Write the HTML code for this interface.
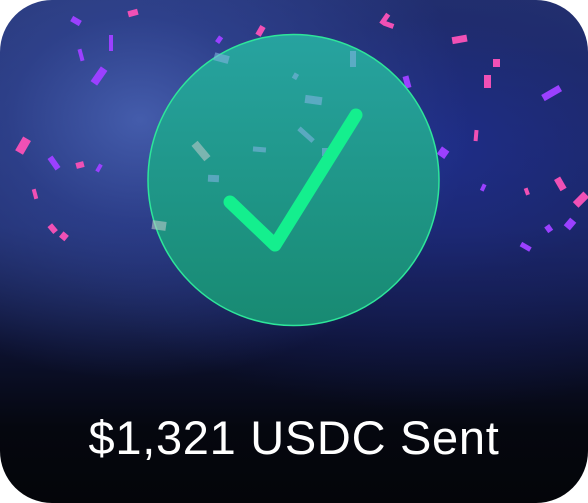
<!DOCTYPE html>
<html><head><meta charset="utf-8"><style>
html,body{margin:0;padding:0;background:#fff;}
.card{position:relative;width:588px;height:503px;border-radius:52px;overflow:hidden;
background:
radial-gradient(ellipse 330px 260px at 140px 120px, rgba(70,95,175,0.95) 0%, rgba(50,70,150,0.7) 40%, rgba(30,40,110,0) 100%),
radial-gradient(ellipse 420px 260px at 430px 150px, rgba(30,45,140,0.9) 0%, rgba(25,35,110,0.5) 50%, rgba(10,15,50,0) 100%),
linear-gradient(180deg,#27366f 0%,#1d2a66 45%,#0d1231 68%,#05070f 85%,#040509 100%);}
svg{position:absolute;left:0;top:0;}
.t{position:absolute;left:0;width:588px;top:410px;text-align:center;color:#fff;font-family:"Liberation Sans",sans-serif;font-size:47px;letter-spacing:0.7px;line-height:56px;}
</style></head><body>
<div class="card">
<svg width="588" height="503" viewBox="0 0 588 503">
<defs><linearGradient id="g" x1="0" y1="0" x2="0" y2="1"><stop offset="0" stop-color="#27a3a0"/><stop offset="1" stop-color="#188a72"/></linearGradient></defs>
<g fill="#9b40ff">
<rect x="71" y="18" width="10" height="6" transform="rotate(30 76 21)"/>
<rect x="109" y="35" width="4" height="16"/>
<rect x="79" y="49" width="4" height="12" transform="rotate(-15 81 55)"/>
<rect x="95" y="67" width="8" height="18" transform="rotate(35 99 76)"/>
<rect x="51" y="156" width="6" height="14" transform="rotate(-35 54 163)"/>
<rect x="97" y="164" width="4" height="8" transform="rotate(30 99 168)"/>
<rect x="217" y="36" width="5" height="7" transform="rotate(35 219 39)"/>
<rect x="404" y="76" width="6" height="12" transform="rotate(-15 407 82)"/>
<rect x="439" y="148" width="9" height="9" transform="rotate(35 443 152)"/>
<rect x="542" y="90" width="20" height="7" transform="rotate(-30 551 94)"/>
<rect x="481" y="184" width="4" height="7" transform="rotate(25 483 188)"/>
<rect x="566" y="219" width="8" height="10" transform="rotate(40 570 224)"/>
<rect x="546" y="225" width="6" height="7" transform="rotate(-35 549 229)"/>
<rect x="520" y="244" width="11" height="5" transform="rotate(30 525 247)"/>
</g>
<g fill="#f050b5">
<rect x="128" y="10" width="10" height="6" transform="rotate(-15 133 13)"/>
<rect x="258" y="26" width="6" height="10" transform="rotate(30 261 30)"/>
<rect x="382" y="14" width="5" height="12" transform="rotate(35 386 20)"/>
<rect x="384" y="22" width="10" height="5" transform="rotate(20 388 24)"/>
<rect x="452" y="36" width="15" height="7" transform="rotate(-10 459 39)"/>
<rect x="493" y="59" width="7" height="8"/>
<rect x="484" y="75" width="7" height="13"/>
<rect x="474" y="130" width="4" height="11" transform="rotate(5 475 136)"/>
<rect x="19" y="138" width="9" height="16" transform="rotate(30 24 145)"/>
<rect x="76" y="162" width="8" height="6" transform="rotate(-15 80 165)"/>
<rect x="33" y="189" width="4" height="10" transform="rotate(-15 35 194)"/>
<rect x="50" y="224" width="6" height="9" transform="rotate(-40 53 229)"/>
<rect x="60" y="233" width="7" height="7" transform="rotate(40 64 237)"/>
<rect x="557" y="177" width="7" height="13" transform="rotate(-30 561 184)"/>
<rect x="525" y="188" width="4" height="7" transform="rotate(-20 527 192)"/>
<rect x="577" y="193" width="8" height="15" transform="rotate(45 582 200)"/>
</g>
<circle cx="293.5" cy="180" r="145.5" fill="url(#g)" stroke="#2ee69a" stroke-width="1.5"/>
<g fill="#7fb3e0" opacity="0.6">
<rect x="214" y="54" width="15" height="8" transform="rotate(15 221 58)"/>
<rect x="350" y="51" width="6" height="16"/>
<rect x="293" y="73" width="5" height="6" transform="rotate(30 295 76)"/>
<rect x="305" y="96" width="17" height="8" transform="rotate(8 313 100)"/>
<rect x="297" y="132" width="19" height="5" transform="rotate(42 306 134)"/>
<rect x="253" y="147" width="13" height="5" transform="rotate(5 260 149)"/>
<rect x="322" y="148" width="6" height="8"/>
<rect x="208" y="175" width="11" height="7" transform="rotate(3 214 178)"/>
</g>
<g fill="#b8c8c8" opacity="0.6">
<rect x="197" y="141" width="8" height="20" transform="rotate(-40 201 151)"/>
<rect x="152" y="221" width="14" height="9" transform="rotate(8 159 226)"/>
</g>
<polyline points="230,202 275,245 356,115" fill="none" stroke="#14ef8e" stroke-width="13" stroke-linecap="round" stroke-linejoin="round"/>
</svg>
<div class="t">$1,321 USDC Sent</div>
</div>
</body></html>
